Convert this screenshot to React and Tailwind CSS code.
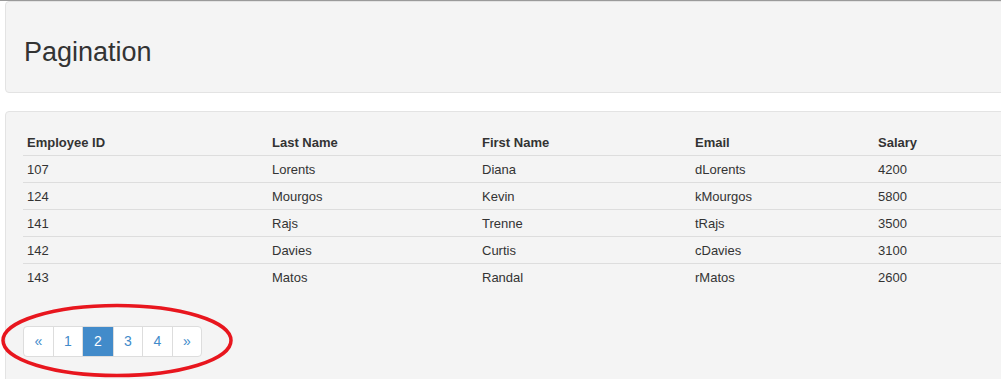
import React from "react";

const rows = [
  ["107", "Lorents", "Diana", "dLorents", "4200"],
  ["124", "Mourgos", "Kevin", "kMourgos", "5800"],
  ["141", "Rajs", "Trenne", "tRajs", "3500"],
  ["142", "Davies", "Curtis", "cDavies", "3100"],
  ["143", "Matos", "Randal", "rMatos", "2600"],
];
const widths = ["w-[245px]", "w-[210px]", "w-[213px]", "w-[183px]", "w-[200px]"];
const pageW = ["w-[30px]", "w-[29px]", "w-[31px]", "w-[29px]", "w-[30px]", "w-[28px]"];

export default function App() {
  return (
    <div
      className="relative w-[1001px] h-[379px] overflow-hidden bg-white text-[#333]"
      style={{ fontFamily: '"Liberation Sans", Arial, sans-serif' }}
    >
      <div className="h-px bg-[#9a9a9a]" />
      <div className="ml-[5px] w-[1100px] h-[92px] bg-[#f4f4f4] border border-[#e3e3e3] rounded-[4px] flex items-center pl-[18px] pt-[10px]">
        <h2 className="text-[27px] leading-none font-normal text-[#333]">Pagination</h2>
      </div>
      <div className="ml-[5px] mt-[18px] w-[1100px] h-[300px] bg-[#f4f4f4] border border-[#e3e3e3] rounded-[4px] pt-[17px] pl-[17px]">
        <div className="text-[13px] leading-[18px]">
          <div className="flex border-b border-[#dddddd]">
            {["Employee ID", "Last Name", "First Name", "Email", "Salary"].map((h, i) => (
              <div key={h} className={`${widths[i]} px-[4px] pt-[5px] pb-[3px] font-bold`}>
                {h}
              </div>
            ))}
          </div>
          {rows.map((r, ri) => (
            <div key={ri} className={`flex ${ri > 0 ? "border-t border-[#dddddd]" : ""}`}>
              {r.map((c, i) => (
                <div key={i} className={`${widths[i]} px-[4px] pt-[5px] pb-[3px]`}>
                  {c}
                </div>
              ))}
            </div>
          ))}
        </div>
        <div className="mt-[36px] flex w-max rounded-[4px] border border-[#dddddd] bg-white text-[14px] text-[#428bca]">
          {["«", "1", "2", "3", "4", "»"].map((p, i) => (
            <div
              key={p}
              className={`h-[29px] flex items-center justify-center ${pageW[i]} ${i === 5 ? "" : "border-r border-[#dddddd]"} ${
                p === "2" ? "bg-[#428bca] text-white border-[#428bca]" : ""
              } ${i === 0 ? "rounded-l-[3px]" : ""} ${i === 5 ? "rounded-r-[3px]" : ""}`}
            >
              {p}
            </div>
          ))}
        </div>
      </div>
      <svg className="absolute left-0 top-0 pointer-events-none" width="1001" height="379">
        <ellipse cx="117" cy="340.5" rx="114" ry="35" fill="none" stroke="#e8161e" strokeWidth="3.5" />
      </svg>
    </div>
  );
}
